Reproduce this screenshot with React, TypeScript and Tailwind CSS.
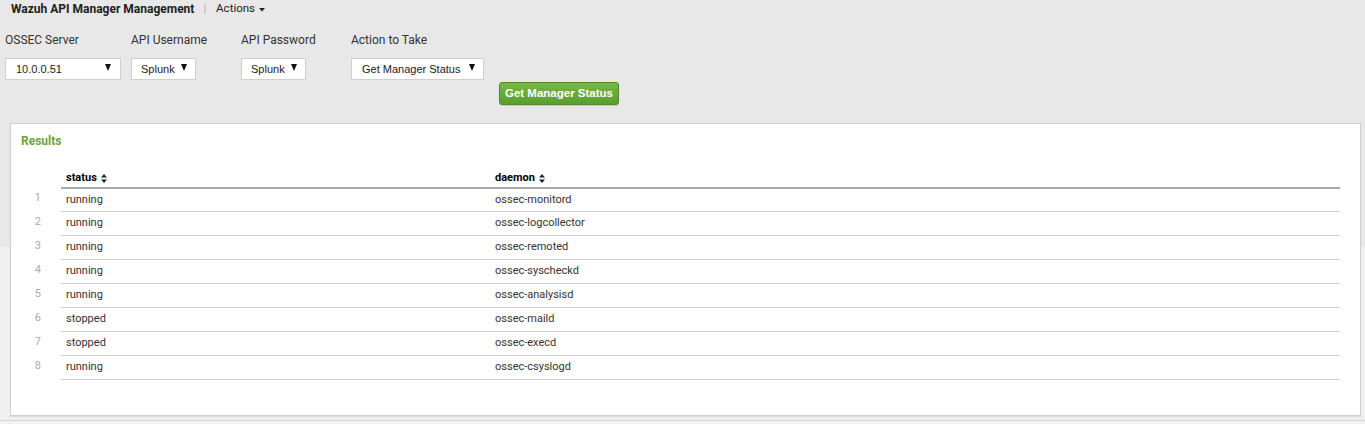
const rows = [
  ["running", "ossec-monitord"],
  ["running", "ossec-logcollector"],
  ["running", "ossec-remoted"],
  ["running", "ossec-syscheckd"],
  ["running", "ossec-analysisd"],
  ["stopped", "ossec-maild"],
  ["stopped", "ossec-execd"],
  ["running", "ossec-csyslogd"],
];

function SortIcon() {
  return (
    <svg width="6" height="9" viewBox="0 0 6 9" className="ml-[4px] inline-block">
      <path d="M0 3.5 L3 0 L6 3.5 Z M0 5.5 L3 9 L6 5.5 Z" fill="#222" />
    </svg>
  );
}

function Select({ value, width, padLeft, padRight }: { value: string; width: string; padLeft: string; padRight: string }) {
  return (
    <div
      className={`${width} ${padLeft} ${padRight} h-[22px] bg-white border border-[#cfcfcf] flex items-center justify-between text-[11px] text-[#222] font-['Liberation_Sans',Arial,sans-serif]`}
    >
      <span>{value}</span>
      <svg width="6" height="7" viewBox="0 0 6 7" className="mb-[3px]">
        <path d="M0 0 L6 0 L3 7 Z" fill="#111" />
      </svg>
    </div>
  );
}

export default function App() {
  return (
    <div className="w-[1365px] h-[424px] bg-[#f2f2f2] font-['Roboto',Arial,sans-serif] text-[#333] overflow-hidden">
      <div className="h-[421px] border-b border-[#d4d4d4] bg-[linear-gradient(to_bottom,#e8e8e8_0px,#e8e8e8_247px,#f0f0f0_247px)]">
        {/* title bar */}
        <div className="h-[18px] flex items-center pl-[11px]">
          <span className="text-[12px] font-bold text-[#222]">Wazuh API Manager Management</span>
          <span className="ml-[9px] text-[11px] text-[#aaa]">|</span>
          <span className="ml-[10px] text-[11.5px] text-[#222] flex items-center">
            Actions
            <svg width="6" height="4" viewBox="0 0 6 4" className="ml-[4px] mt-[1px]">
              <path d="M0 0 L6 0 L3 3.5 Z" fill="#222" />
            </svg>
          </span>
        </div>

        {/* inputs */}
        <div className="flex pl-[5px] pt-[14px]">
          <div className="w-[126px]">
            <div className="text-[12px] leading-[16px] text-[#333]">OSSEC Server</div>
            <div className="mt-[10px]">
              <Select value="10.0.0.51" width="w-[116px]" padLeft="pl-[10px]" padRight="pr-[9px]" />
            </div>
          </div>
          <div className="w-[110px]">
            <div className="text-[12px] leading-[16px] text-[#333]">API Username</div>
            <div className="mt-[10px]">
              <Select value="Splunk" width="w-[65px]" padLeft="pl-[9px]" padRight="pr-[8px]" />
            </div>
          </div>
          <div className="w-[110px]">
            <div className="text-[12px] leading-[16px] text-[#333]">API Password</div>
            <div className="mt-[10px]">
              <Select value="Splunk" width="w-[65px]" padLeft="pl-[9px]" padRight="pr-[8px]" />
            </div>
          </div>
          <div className="w-[300px]">
            <div className="text-[12px] leading-[16px] text-[#333]">Action to Take</div>
            <div className="mt-[10px]">
              <Select value="Get Manager Status" width="w-[133px]" padLeft="pl-[10px]" padRight="pr-[8px]" />
            </div>
            <button className="ml-[148px] mt-0 h-[23px] w-[120px] rounded-[3px] border border-[#4e8a26] bg-[linear-gradient(to_bottom,#75b744,#5c9d31)] text-white text-[11.5px] font-bold font-['Liberation_Sans',Arial,sans-serif] shadow-[0_1px_1px_rgba(0,0,0,0.15)]">
              Get Manager Status
            </button>
          </div>
        </div>

        {/* results panel */}
        <div className="mx-[10px] mt-[18px] w-[1351px] h-[293px] bg-white border border-[#d0d0d0] shadow-[0_1px_1px_rgba(0,0,0,0.08)] pl-[10px] pr-[20px] pt-[10px]">
          <div className="text-[12px] font-bold text-[#6aa43b] leading-[15px]">Results</div>
          <table className="mt-[20px] w-[1319px] border-collapse text-[11px]">
            <thead>
              <tr className="h-[18px]">
                <th className="w-[40px]"></th>
                <th className="w-[429px] text-left font-bold text-black pl-[5px] pt-[1px] border-b-2 border-[#a8a8a8] align-top">
                  status
                  <SortIcon />
                </th>
                <th className="text-left font-bold text-black pl-[5px] pt-[1px] border-b-2 border-[#a8a8a8] align-top">
                  daemon
                  <SortIcon />
                </th>
              </tr>
            </thead>
            <tbody>
              {rows.map((r, i) => (
                <tr key={i} className="h-[24px]">
                  <td className="text-right pr-[20px] text-[#aaa] align-top pt-[2px]">{i + 1}</td>
                  <td className="pl-[5px] border-b border-[#d0d0d0] text-[#333]">{r[0]}</td>
                  <td className="pl-[5px] border-b border-[#d0d0d0] text-[#333]">{r[1]}</td>
                </tr>
              ))}
            </tbody>
          </table>
        </div>
      </div>
    </div>
  );
}
